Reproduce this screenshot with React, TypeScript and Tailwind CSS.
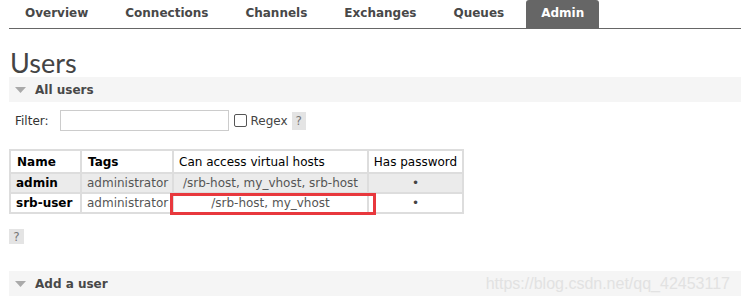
const tabs = ["Overview", "Connections", "Channels", "Exchanges", "Queues", "Admin"];

const users = [
  { name: "admin", tags: "administrator", vhosts: "/srb-host, my_vhost, srb-host", shaded: true },
  { name: "srb-user", tags: "administrator", vhosts: "/srb-host, my_vhost", shaded: false },
];

function Caret() {
  return (
    <svg width="11" height="6" viewBox="0 0 11 6" className="shrink-0">
      <path d="M0 0 L11 0 L5.5 6 Z" fill="#aaaaaa" />
    </svg>
  );
}

function SectionBar({ title, children }: { title: string; children?: React.ReactNode }) {
  return (
    <div className="flex h-[25px] items-center bg-[#f5f5f5] pl-[6px]">
      <Caret />
      <span className="ml-[9px] font-bold text-[#484848]">{title}</span>
      {children}
    </div>
  );
}

export default function App() {
  return (
    <div className="h-[297px] w-[741px] overflow-hidden bg-white font-['DejaVu_Sans',Verdana,sans-serif] text-[12px] text-[#484848]">
      {/* top navigation */}
      <div className="ml-[9px] flex h-[29px] border-b border-[#666666] pl-px">
        {tabs.map((t) => (
          <div
            key={t}
            className={`mr-[7px] flex items-center px-[15px] pb-[2px] font-bold ${
              t === "Admin" ? "rounded-t-[3px] bg-[#666666] text-white" : "text-[#484848]"
            }`}
          >
            {t}
          </div>
        ))}
      </div>

      <div className="ml-[9px]">
        <h1 className="mt-[21px] h-[26px] pl-px font-['Lato',sans-serif] text-[27px] leading-[26px] text-[#444444]">
          Users
        </h1>

        <div className="mt-px">
          <SectionBar title="All users" />
        </div>

        <div className="mt-[8px] flex items-center pl-[6px]">
          <span className="text-[#333333]">Filter:</span>
          <input
            type="text"
            className="ml-[11px] h-[21px] w-[169px] border border-[#cccccc] bg-white outline-none"
          />
          <span className="ml-[5px] h-[13px] w-[13px] rounded-[2px] border border-[#555555] bg-white" />
          <span className="ml-[4px] text-[#444444]">Regex</span>
          <span className="ml-[4px] flex h-[18px] w-[14px] items-center justify-center bg-[#e4e4e4] text-[#777777]">
            ?
          </span>
        </div>

        <div className="relative mt-[18px] w-[453px]">
          <table className="w-[453px] table-fixed border-collapse">
            <colgroup>
              <col className="w-[71px]" />
              <col className="w-[92px]" />
              <col className="w-[195px]" />
              <col className="w-[95px]" />
            </colgroup>
            <thead>
              <tr className="h-[23px] bg-white">
                <th className="border-2 border-[#dddddd] px-[6px] text-left font-bold text-black">Name</th>
                <th className="border-2 border-[#dddddd] px-[6px] text-left font-bold text-black">Tags</th>
                <th className="border-2 border-[#dddddd] px-[5px] text-left font-normal text-black">
                  Can access virtual hosts
                </th>
                <th className="border-2 border-[#dddddd] px-[4px] text-center font-normal text-black">
                  Has password
                </th>
              </tr>
            </thead>
            <tbody>
              {users.map((u) => (
                <tr key={u.name} className={`h-[20px] ${u.shaded ? "bg-[#ebebeb]" : "bg-white"}`}>
                  <td className="border-2 border-[#dddddd] px-[5px] font-bold text-black">{u.name}</td>
                  <td className="border-2 border-[#dddddd] px-[5px] text-[#555555]">{u.tags}</td>
                  <td className="whitespace-nowrap border-2 border-[#dddddd] px-[4px] text-center text-[#555555]">
                    {u.vhosts}
                  </td>
                  <td className="border-2 border-[#dddddd] text-center text-[#444444]">•</td>
                </tr>
              ))}
            </tbody>
          </table>
          {/* annotation box */}
          <div className="absolute left-[161px] top-[44px] h-[22px] w-[206px] border-[3px] border-[#e8383d]" />
        </div>

        <div className="mt-[15px] flex h-[15px] w-[15px] items-center justify-center bg-[#e4e4e4] text-[12px] leading-none text-[#777777]">
          ?
        </div>

        <div className="mt-[27px]">
          <SectionBar title="Add a user">
            <span className="ml-auto pr-[11px] font-['Liberation_Sans',Arial,sans-serif] text-[16px] text-[#e2e2e2]">
              https://blog.csdn.net/qq_42453117
            </span>
          </SectionBar>
        </div>
      </div>
    </div>
  );
}
